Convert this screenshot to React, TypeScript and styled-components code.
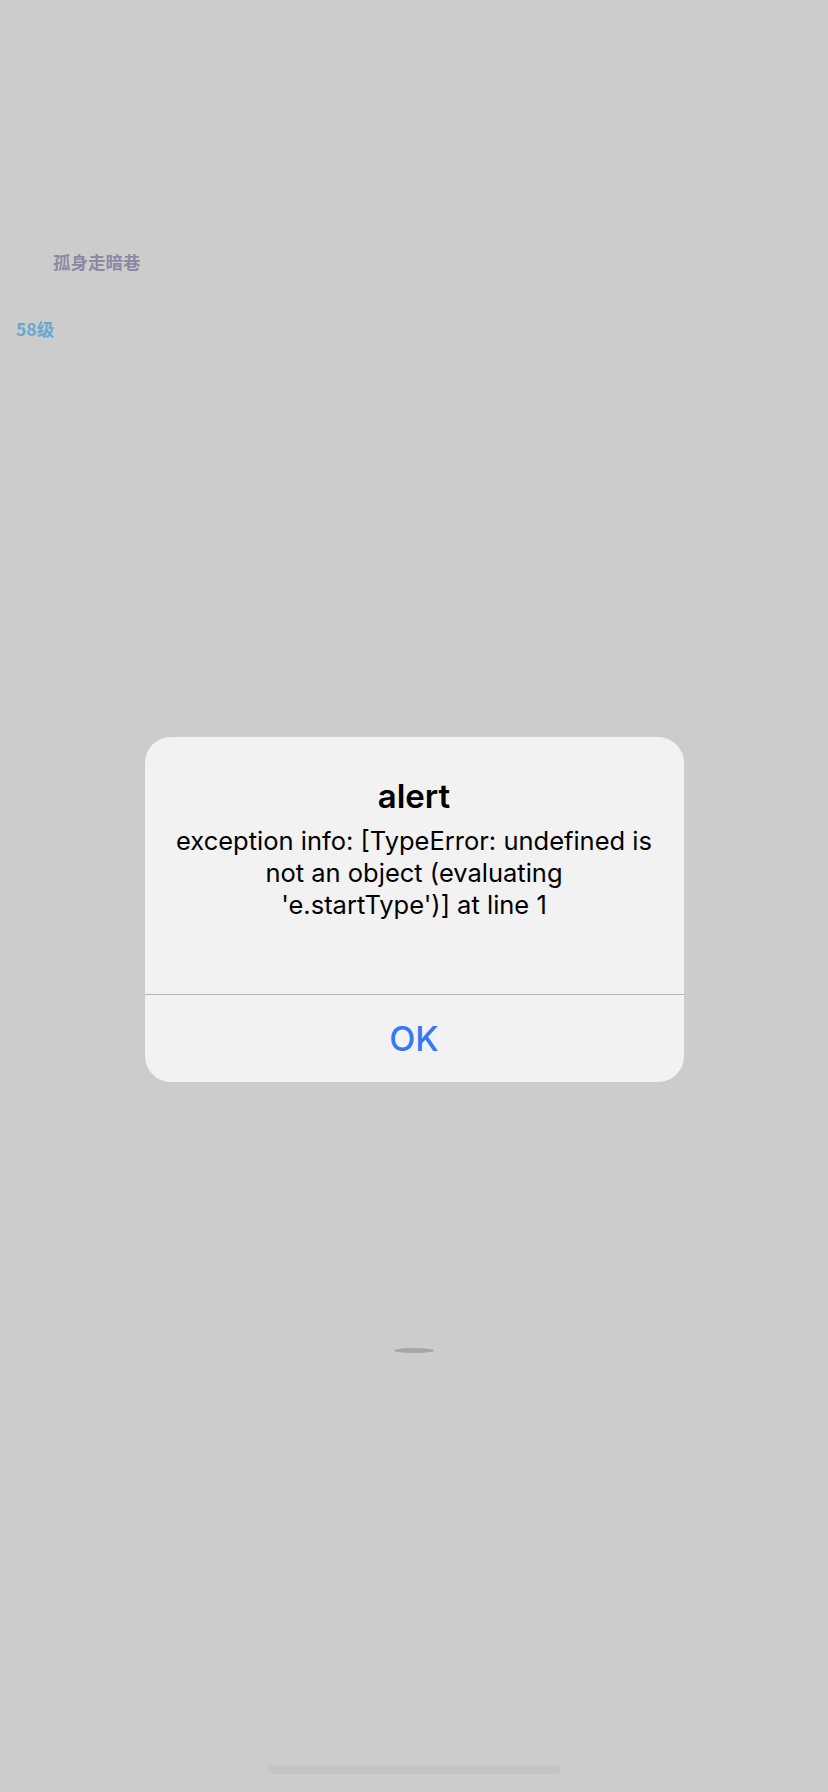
import styled, { createGlobalStyle } from "styled-components";

const GlobalStyle = createGlobalStyle`
  html, body {
    margin: 0;
    padding: 0;
    background: #cccccc;
  }
  * {
    box-sizing: border-box;
  }
`;

const Style = {
  Page: styled.div`
    position: relative;
    width: 828px;
    height: 1792px;
    background: #cccccc;
    display: flex;
    flex-direction: column;
    font-family: "Noto Sans CJK SC", "Noto Sans", sans-serif;
    overflow: hidden;
  `,
  Profile: styled.div`
    display: flex;
    flex-direction: column;
    padding-top: 250px;
  `,
  Nickname: styled.div`
    margin-left: 53px;
    font-size: 17.5px;
    line-height: 24px;
    font-weight: 700;
    color: #8c89a6;
  `,
  Level: styled.div`
    margin-top: 43px;
    margin-left: 16px;
    font-size: 17.5px;
    line-height: 24px;
    font-weight: 700;
    color: #67a8d0;
  `,
  Loader: styled.div`
    align-self: center;
    margin-top: 1007px;
    width: 40px;
    height: 5px;
    border-radius: 50%;
    background: #a6a6a6;
    filter: blur(0.6px);
  `,
  Spacer: styled.div`
    flex: 1;
  `,
  HomeIndicator: styled.div`
    align-self: center;
    width: 294px;
    height: 9px;
    margin-bottom: 18px;
    border-radius: 5px;
    background: #c5c5c5;
  `,
  Overlay: styled.div`
    position: absolute;
    inset: 0;
    display: flex;
    justify-content: center;
    padding-top: 737px;
  `,
  Alert: styled.div`
    width: 539px;
    height: 345px;
    border-radius: 26px;
    background: #f2f2f2;
    display: flex;
    flex-direction: column;
    overflow: hidden;
    font-family: Inter, "Liberation Sans", sans-serif;
  `,
  Body: styled.div`
    flex: 1;
    display: flex;
    flex-direction: column;
    align-items: center;
    padding: 38px 30px 0;
    text-align: center;
  `,
  Title: styled.div`
    font-size: 33px;
    line-height: 42px;
    font-weight: 600;
    color: #000;
  `,
  Message: styled.div`
    margin-top: 8px;
    font-size: 25.5px;
    line-height: 32px;
    color: #000;
  `,
  Button: styled.button`
    height: 88px;
    border: none;
    border-top: 1px solid #b4b4b4;
    background: transparent;
    font-family: inherit;
    font-size: 34px;
    font-weight: 500;
    color: #3478f6;
    cursor: pointer;
    padding: 0;
  `,
};

export default function App() {
  return (
    <>
      <GlobalStyle />
      <Style.Page>
        <Style.Profile>
          <Style.Nickname>孤身走暗巷</Style.Nickname>
          <Style.Level>58级</Style.Level>
        </Style.Profile>
        <Style.Loader />
        <Style.Spacer />
        <Style.HomeIndicator />

        <Style.Overlay>
          <Style.Alert>
            <Style.Body>
              <Style.Title>alert</Style.Title>
              <Style.Message>
                exception info: [TypeError: undefined is
                <br />
                not an object (evaluating
                <br />
                'e.startType')] at line 1
              </Style.Message>
            </Style.Body>
            <Style.Button>OK</Style.Button>
          </Style.Alert>
        </Style.Overlay>
      </Style.Page>
    </>
  );
}
